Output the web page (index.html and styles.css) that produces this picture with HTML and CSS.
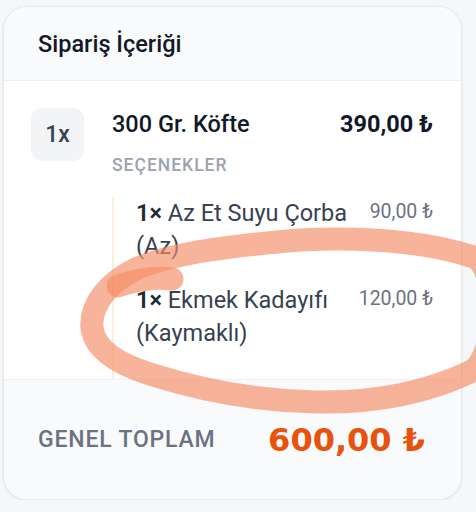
FILE: index.html
```html
<!DOCTYPE html>
<html>
<head>
    <title>Sipariş İçeriği</title>
    <meta name="viewport" content="width=device-width, initial-scale=1.0">
    <link rel="stylesheet" href="styles.css">
</head>
<body>
    <div class="card">
        <div class="card-header">
            <h2>Sipariş İçeriği</h2>
        </div>
        <div class="card-body">
            <div class="item">
                <div class="qty">1x</div>
                <div class="item-info">
                    <div class="item-top">
                        <span class="item-name">300 Gr. Köfte</span>
                        <span class="item-price">390,00 ₺</span>
                    </div>
                    <div class="options-label">SEÇENEKLER</div>
                    <ul class="options">
                        <li>
                            <span class="option-name"><b>1×</b> Az Et Suyu Çorba (Az)</span>
                            <span class="option-price">90,00 ₺</span>
                        </li>
                        <li>
                            <span class="option-name"><b>1×</b> Ekmek Kadayıfı (Kaymaklı)</span>
                            <span class="option-price">120,00 ₺</span>
                        </li>
                    </ul>
                </div>
            </div>
        </div>
        <div class="card-footer">
            <span class="total-label">GENEL TOPLAM</span>
            <span class="total-value">600,00 ₺</span>
        </div>
    </div>
    <!-- hand drawn marker circle on the screenshot -->
    <svg class="marker" width="476" height="512" viewBox="0 0 476 512">
        <path d="M 300 240 C 240 245, 175 252, 138 268 C 108 282, 90 305, 92 328 C 95 350, 118 364, 150 374 C 200 390, 260 401, 317 402 C 380 403, 432 390, 470 372 C 498 358, 498 272, 476 258 C 440 245, 380 236, 300 240 Z" />
        <path d="M 118 286 C 138 279, 158 277, 172 279" />
    </svg>
</body>
</html>
```

FILE: styles.css
```css
body {
    font-family: Roboto, "Noto Sans", sans-serif;
    margin: 0;
    background-color: #f6f7f9;
    color: #111827;
}
.card {
    width: 457px;
    height: 492px;
    margin: 6px 0 0 3px;
    background-color: #fff;
    border: 1px solid #e6e8eb;
    border-radius: 24px;
    box-shadow: 0 1px 3px rgba(0, 0, 0, 0.08);
    overflow: hidden;
    display: flex;
    flex-direction: column;
}
.card-header {
    height: 75px;
    background-color: #f9fafb;
    border-bottom: 1px solid #f0f1f3;
    display: flex;
    align-items: center;
    padding: 0 34px;
}
.card-header h2 {
    margin: 0;
    font-size: 23.5px;
    font-weight: 500;
    color: #111827;
}
.card-body {
    flex: 1;
    padding: 27px 28px 0 27px;
}
.item {
    display: flex;
    gap: 28px;
}
.qty {
    flex: none;
    width: 53px;
    height: 53px;
    border-radius: 11px;
    background-color: #f3f4f6;
    color: #374151;
    font-size: 23px;
    font-weight: 500;
    display: flex;
    align-items: center;
    justify-content: center;
}
.item-info {
    flex: 1;
}
.item-top {
    display: flex;
    justify-content: space-between;
    font-size: 23.5px;
    line-height: 32px;
}
.item-name {
    font-weight: 500;
}
.item-price {
    font-weight: 700;
}
.options-label {
    margin-top: 15px;
    font-size: 17.5px;
    font-weight: 500;
    color: #9ca3af;
    letter-spacing: 1px;
}
.options {
    list-style-type: none;
    margin: 22px 0 0;
    padding: 0 0 8px 22px;
    border-left: 2px solid #fbeedb;
}
.options li {
    display: flex;
    justify-content: space-between;
    gap: 14px;
    margin-bottom: 21px;
}
.option-name {
    flex: 1;
    font-size: 23.5px;
    line-height: 33px;
    color: #374151;
}
.option-name b {
    font-weight: 600;
    color: #1f2937;
}
.option-price {
    font-size: 19.5px;
    line-height: 30px;
    color: #6b7280;
    white-space: nowrap;
}
.card-footer {
    height: 122px;
    background-color: #f9fafb;
    border-top: 1px solid #eef0f2;
    display: flex;
    justify-content: space-between;
    align-items: center;
    padding: 0 36px 0 34px;
}
.total-label {
    font-size: 23px;
    font-weight: 500;
    color: #6b7280;
    letter-spacing: 0.8px;
}
.total-value {
    font-family: "DejaVu Sans", Roboto, sans-serif;
    font-size: 32px;
    font-weight: 700;
    color: #e8520c;
}
.marker {
    position: absolute;
    top: 0;
    left: 0;
    pointer-events: none;
}
.marker path {
    fill: none;
    stroke: rgba(245, 140, 100, 0.65);
    stroke-width: 23;
    stroke-linecap: round;
    stroke-linejoin: round;
}
```
